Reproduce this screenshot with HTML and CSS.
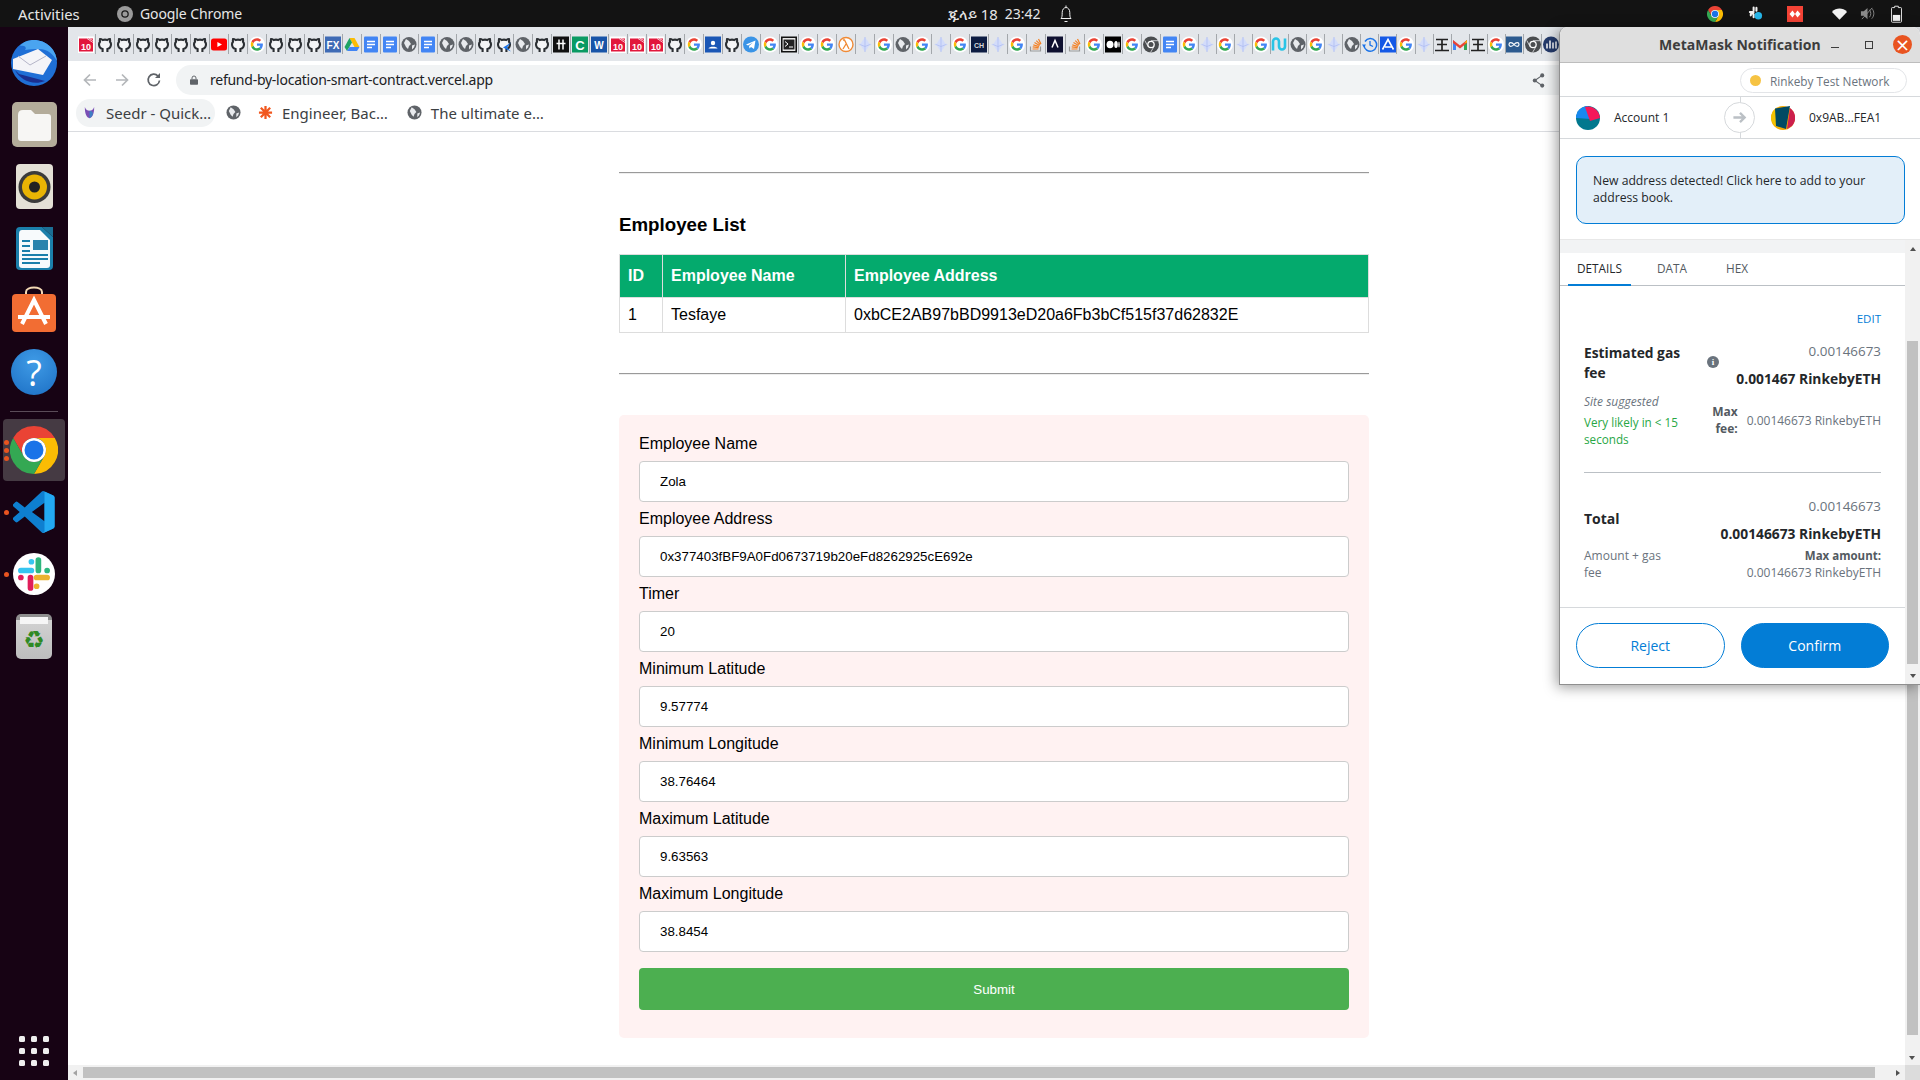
FILE: index.html
```html
<!DOCTYPE html>
<html lang="en">
<head>
<meta charset="utf-8">
<title>Refund by location</title>
<link rel="stylesheet" href="styles.css">
</head>
<body>
<svg class="defs" aria-hidden="true">
  <symbol id="io" viewBox="0 0 16 16"><rect width="16" height="17" fill="#fff"/><rect x="1" y="2" width="14" height="13" fill="#e2173c"/><path d="M9 2l6 4M11 2l4 2" stroke="#fff" stroke-width=".7"/><text x="8" y="13.5" class="t9 w" text-anchor="middle">10</text></symbol>
  <symbol id="gh" viewBox="0 0 16 16"><path d="M5.6 15.4v-2.8C3.4 12 2 10.5 2 7.8c0-1 .4-1.9 1-2.6-.2-.6-.2-1.6.1-2.7 1 0 1.9.5 2.6 1 1.4-.4 3.2-.4 4.6 0 .7-.5 1.6-1 2.6-1 .3 1.1.3 2.1.1 2.7.6.7 1 1.6 1 2.6 0 2.7-1.4 4.2-3.6 4.8v2.8" fill="#f4f5f6" stroke="#2b2f33" stroke-width="2.100"/></symbol>
  <symbol id="gx" viewBox="0 0 16 16"><use href="#gh"/><path d="M7 11l8-5-4 5 4 4z" fill="#1a73e8"/></symbol>
  <symbol id="yt" viewBox="0 0 16 16"><rect y="2" width="16" height="12" rx="2.5" fill="#f00"/><path d="M6.4 5.4v5.2L11 8z" fill="#fff"/></symbol>
  <symbol id="g" viewBox="0 0 18 18"><circle cx="9" cy="9" r="9" fill="#fff"/><g transform="translate(2 2) scale(.29)"><path fill="#EA4335" d="M24 9.5c3.54 0 6.71 1.22 9.21 3.6l6.85-6.85C35.9 2.38 30.47 0 24 0 14.62 0 6.51 5.38 2.56 13.22l7.98 6.19C12.43 13.72 17.74 9.5 24 9.5z"/><path fill="#4285F4" d="M46.98 24.55c0-1.57-.15-3.09-.38-4.55H24v9.02h12.94c-.58 2.96-2.26 5.48-4.78 7.18l7.73 6c4.51-4.18 7.09-10.36 7.09-17.65z"/><path fill="#FBBC05" d="M10.53 28.59c-.48-1.45-.76-2.99-.76-4.59s.27-3.14.76-4.59l-7.98-6.19C.92 16.46 0 20.12 0 24c0 3.88.92 7.54 2.56 10.78l7.97-6.19z"/><path fill="#34A853" d="M24 48c6.48 0 11.93-2.13 15.89-5.81l-7.73-6c-2.15 1.45-4.92 2.3-8.16 2.3-6.26 0-11.57-4.22-13.47-9.91l-7.98 6.19C6.51 42.62 14.62 48 24 48z"/></g></symbol>
  <symbol id="fx" viewBox="0 0 16 16"><rect width="16" height="16" fill="#3f6bb5"/><text x="8" y="12" class="t10 w" text-anchor="middle">FX</text></symbol>
  <symbol id="dr" viewBox="0 0 16 16"><path d="M5.5 1.5h5l5 9h-5z" fill="#fbbc04"/><path d="M5.5 1.5L.5 10.500l2.500 4 5-8.500z" fill="#1fa463"/><path d="M3 14.500h10l2.500-4h-10z" fill="#4285f4"/></symbol>
  <symbol id="doc" viewBox="0 0 16 16"><rect x="1" width="14" height="16" rx="1" fill="#4285f4"/><path d="M4 5h8M4 8h8M4 11h5" stroke="#fff" stroke-width="1.400"/></symbol>
  <symbol id="gl" viewBox="0 0 16 16"><circle cx="8" cy="8" r="7.500" fill="#5f6368"/><path d="M5 2.500l3 2 2 3-2 2-1 3-2-2-2-4zM11 9l3-1-1 3-2 2z" fill="#e8eaed"/></symbol>
  <symbol id="hh" viewBox="0 0 16 16"><rect width="16" height="16" fill="#111"/><path d="M6 3v10M10 3v10M3.500 7h9" stroke="#fff" stroke-width="1.500"/></symbol>
  <symbol id="cc" viewBox="0 0 16 16"><rect width="16" height="16" fill="#0a9a63"/><text x="8" y="13" class="t12 w" text-anchor="middle">C</text></symbol>
  <symbol id="ww" viewBox="0 0 16 16"><rect width="16" height="16" fill="#1854a8"/><text x="8" y="12" class="t10 w" text-anchor="middle">W</text></symbol>
  <symbol id="ct" viewBox="0 0 16 16"><rect width="16" height="16" fill="#1a56b5"/><circle cx="8" cy="6.500" r="2.200" fill="#fff"/><path d="M3.500 12c.5-2.500 8.500-2.500 9 0z" fill="#fff"/></symbol>
  <symbol id="tg" viewBox="0 0 16 16"><circle cx="8" cy="8" r="8" fill="#3a94e6"/><path d="M3 8l9.500-4-1.500 8.500-3-2-1.500 1.500-.5-2.500 4-3.500-5 3z" fill="#fff"/></symbol>
  <symbol id="tm" viewBox="0 0 16 16"><rect x=".8" y=".8" width="14.400" height="14.400" fill="#fff" stroke="#111" stroke-width="1.600"/><rect x="2.500" y="3" width="11" height="10" fill="#222"/><path d="M4 5l3 2.500L4 10M8 10.500h4" stroke="#fff" fill="none"/></symbol>
  <symbol id="la" viewBox="0 0 16 16"><circle cx="8" cy="8" r="7" fill="#fff" stroke="#f08a35" stroke-width="1.400"/><path d="M5 3.500h1.500L11 12.500M8 7.500l-3 5" stroke="#f08a35" stroke-width="1.300" fill="none"/></symbol>
  <symbol id="et" viewBox="0 0 16 16"><path d="M8 .5L13 8l-5 7.500L3 8z" fill="#d3dcfa"/><path d="M8 .5v15M3 8l5 2 5-2" stroke="#aab9f0" stroke-width=".7" fill="none"/><circle cx="2.500" cy="8" r=".8" fill="#c9d4f7"/><circle cx="13.500" cy="8" r=".8" fill="#c9d4f7"/></symbol>
  <symbol id="ch" viewBox="0 0 16 16"><rect width="16" height="16" fill="#0d1c42"/><text x="8" y="11" class="t7 l" text-anchor="middle">CH</text></symbol>
  <symbol id="so" viewBox="0 0 16 16"><path d="M2.500 10v4.500h10V10" fill="none" stroke="#9a9a9a" stroke-width="1.200"/><path d="M4.500 12.500h6M4.700 10.400l6 .7M5.300 8.300l5.800 1.700M6.500 6.100l5.100 3M8.300 4.200l4 4M10.500 2.500l2.500 5" stroke="#f48024" stroke-width="1.200"/></symbol>
  <symbol id="ad" viewBox="0 0 16 16"><rect width="16" height="16" fill="#0e1030"/><path d="M5 11l3-7 3 7" fill="none" stroke="#fff" stroke-width="1.500"/></symbol>
  <symbol id="md" viewBox="0 0 16 16"><rect width="16" height="16" fill="#000"/><ellipse cx="5" cy="8" rx="3.500" ry="3.800" fill="#fff"/><ellipse cx="11" cy="8" rx="1.800" ry="3.500" fill="#fff"/><ellipse cx="14" cy="8" rx=".7" ry="3" fill="#fff"/></symbol>
  <symbol id="cg" viewBox="0 0 16 16"><circle cx="8" cy="8" r="8" fill="#4a4d50"/><circle cx="8" cy="8" r="3.800" fill="#fff"/><circle cx="8" cy="8" r="2.500" fill="#4a4d50"/><path d="M8 4.200h7M5 10L1.800 4M11 10l-3.500 6" stroke="#e8eaed" stroke-width=".8"/></symbol>
  <symbol id="cy" viewBox="0 0 16 16"><path d="M2 14V5a3 3 0 0 1 6 0v5a3 3 0 0 0 6 0V2" fill="none" stroke="#29c4e6" stroke-width="2.600"/></symbol>
  <symbol id="hi" viewBox="0 0 16 16"><path d="M3 5a6.300 6.300 0 1 1-1 3.500" fill="none" stroke="#1a73e8" stroke-width="1.500"/><path d="M0 8h4L2 11z" fill="#1a73e8"/><path d="M8 4.500V8.500l3 1.500" fill="none" stroke="#1a73e8" stroke-width="1.300"/></symbol>
  <symbol id="ab" viewBox="0 0 16 16"><rect width="16" height="16" fill="#1559e6"/><path d="M2.500 13L8 3l5.500 10M5 10.500h7" fill="none" stroke="#fff" stroke-width="1.600"/></symbol>
  <symbol id="wa" viewBox="0 0 16 16"><path d="M2 3h12M3 8h10M1 14h14M8 3v11" stroke="#222" stroke-width="1.700"/></symbol>
  <symbol id="gm" viewBox="0 0 16 16"><path d="M1 3.500v10h3V7z" fill="#4285f4"/><path d="M15 3.500v10h-3V7z" fill="#34a853"/><path d="M1 3.500L8 9l7-5.500v3L8 12 1 6.500z" fill="#ea4335"/><path d="M12 7l3-3.500V6z" fill="#fbbc04"/></symbol>
  <symbol id="oo" viewBox="0 0 16 16"><rect width="16" height="16" fill="#2c5a8f"/><path d="M8 8C6 5.500 3 5.500 3 8s3 2.500 5 0 5-2.500 5 0-3 2.500-5 0z" fill="none" stroke="#fff" stroke-width="1.200"/></symbol>
  <symbol id="mm" viewBox="0 0 16 16"><circle cx="8" cy="8" r="8" fill="#243a6b"/><path d="M4 12V7M7 12V4M10 12V6M13 12V5" stroke="#fff" stroke-width="1.500"/></symbol>
  <symbol id="chrome" viewBox="0 0 48 48"><path d="M24 0a24 24 0 0 1 20.800 12H24a12 12 0 0 0-10.400 18L3.200 12A24 24 0 0 1 24 0z" fill="#ea4335"/><path d="M44.800 12A24 24 0 0 1 24 48l10.400-18A12 12 0 0 0 24 12z" fill="#fbbc04"/><path d="M3.200 12A24 24 0 0 0 24 48l10.400-18a12 12 0 0 1-20.800 0z" fill="#34a853"/><circle cx="24" cy="24" r="12" fill="#fff"/><circle cx="24" cy="24" r="9.500" fill="#1a73e8"/></symbol>
</svg>

<header class="topbar">
  <div class="top-left">
    <span class="activities">Activities</span>
    <svg class="app-ico" viewBox="0 0 16 16"><circle cx="8" cy="8" r="8" fill="#9a9a9a"/><circle cx="8" cy="8" r="3.800" fill="#1a1a1a"/><circle cx="8" cy="8" r="2.500" fill="#9a9a9a"/></svg>
    <span class="app-name">Google Chrome</span>
  </div>
  <div class="clock"><span class="date">ጁላይ 18</span><span class="time">23:42</span>
    <svg class="bell" viewBox="0 0 14 18"><path d="M2 13.500c1-1 1.200-2.500 1.200-6C3.200 4.500 5 2.500 7 2.500s3.800 2 3.800 5c0 3.500.2 5 1.200 6zM7 .5v2M5.500 16.500h3" fill="none" stroke="#f2f2f2" stroke-width="1"/></svg>
  </div>
  <div class="tray">
    <svg class="tr tr-chrome"><use href="#chrome"/></svg>
    <svg class="tr tr-slack" viewBox="0 0 16 16"><path d="M6 1.500v3M2 6.500h4M9 2v3M3 10a1 1 0 0 1 3-1v3" stroke="#f2f2f2" stroke-width="2.200" stroke-linecap="round" fill="none"/><circle cx="11" cy="10.500" r="4" fill="#26b5e8"/></svg>
    <svg class="tr tr-red" viewBox="0 0 16 16"><rect width="16" height="16" fill="#f44336"/><path d="M5.500 4.500L2.500 8l3 3.500L8 8zM10.500 4.500L8 8l2.500 3.500 3-3.500z" fill="#fff"/></svg>
    <svg class="tr tr-wifi" viewBox="0 0 18 14"><path d="M0 4.500C5-.8 13-.8 18 4.500L9 14z" fill="#f2f2f2"/></svg>
    <svg class="tr tr-vol" viewBox="0 0 16 16"><path d="M1 5.500h3L8 2v12l-4-3.500H1z" fill="#8a8a8a"/><path d="M10 4c2 2 2 6 0 8M12.500 2.500c3 3 3 8 0 11M2 14L13 2" stroke="#8a8a8a" fill="none"/></svg>
    <svg class="tr tr-bat" viewBox="0 0 12 18"><path d="M4 .5h4v1.500h2.500a1 1 0 0 1 1 1V17a1 1 0 0 1-1 1h-9a1 1 0 0 1-1-1V3a1 1 0 0 1 1-1H4z" fill="none" stroke="#f2f2f2"/><rect x="2" y="10" width="8" height="6.500" fill="#f2f2f2"/></svg>
  </div>
</header>

<div class="desktop">
  <nav class="dock">
    <div class="slot"><svg class="d48" viewBox="0 0 48 48"><circle cx="24" cy="25" r="23" fill="#1f6fd6"/><path d="M24 2c12 0 22 9 23 21-4-7-9-12-18-12-5 0-9 0-14 1C18 8 12 7 10 8c3-4 8-6 14-6z" fill="#4aa4f0"/><path d="M5 32c5 10 18 16 30 11L9 36z" fill="#1b2f8f"/><path d="M3 21L28 11l14 11-9 15-30-6z" fill="#f4f4f8"/><path d="M8 18l12 9 16-9" fill="none" stroke="#b5b5c8"/></svg></div>
    <div class="slot"><svg class="d45" viewBox="0 0 45 45"><rect width="45" height="45" rx="5" fill="#b4ac9a"/><path d="M6 13q0-5 5-5h8l4 4h13q3 0 3 3v21q0 3-3 3H9q-3 0-3-3z" fill="#f7f6f4"/></svg></div>
    <div class="slot"><svg class="d45" viewBox="0 0 45 45"><rect x="4" width="37" height="45" rx="4" fill="#e4e0d6"/><circle cx="22.500" cy="23" r="16" fill="#3b3b3b"/><circle cx="22.500" cy="23" r="12.500" fill="#e9b404"/><circle cx="22.500" cy="23" r="5.500" fill="#222"/></svg></div>
    <div class="slot"><svg class="d45" viewBox="0 0 45 45"><path d="M4 5q0-4 4-4h22l11 10v29q0 4-4 4H8q-4 0-4-4z" fill="#1b7fab"/><path d="M7 8q0-4 3-4h18l10 10v25q0 3-3 3H10q-3 0-3-3z" fill="#f7fafc"/><path d="M30 1l11 10V1z" fill="#1b6f95"/><rect x="21" y="14" width="15" height="10" fill="#2a83ad"/><path d="M10 15h8M10 20h8M10 25h8M10 29h26M10 33h26M10 37h18" stroke="#1b7fab" stroke-width="1.800"/></svg></div>
    <div class="slot"><svg class="d48" viewBox="0 0 48 48"><path d="M16 10V6c0-6 16-6 16 0v4" fill="none" stroke="#f3d9b5" stroke-width="2"/><rect x="2" y="8" width="44" height="38" rx="4" fill="#f26d33"/><path d="M12 38L24 14l12 24M8 31h32" fill="none" stroke="#fff" stroke-width="4"/></svg></div>
    <div class="slot"><span class="help">?</span></div>
    <hr class="dock-sep">
    <div class="slot running"><span class="dots"><i></i><i></i><i></i></span><svg class="d48"><use href="#chrome"/></svg></div>
    <div class="slot"><span class="dots"><i></i></span><svg class="d44" viewBox="0 0 100 100"><path d="M96 11L75 1a6 6 0 0 0-7 1L28 39 11 26a4 4 0 0 0-5 0L1 31a4 4 0 0 0 0 6l15 13L1 63a4 4 0 0 0 0 6l5 5a4 4 0 0 0 5 0l17-13 40 37a6 6 0 0 0 7 1l21-10a6 6 0 0 0 3-6V17a6 6 0 0 0-3-6zM75 72L45 50l30-22z" fill="#0e7fd0" fill-rule="evenodd"/><path d="M75 1l21 10a6 6 0 0 1 3 6v66a6 6 0 0 1-3 6L75 99a6 6 0 0 1-7-1c3 2 7 0 7-3z" fill="#23a9f2"/></svg></div>
    <div class="slot"><span class="dots"><i></i></span><svg class="d44" viewBox="0 0 48 48"><circle cx="24" cy="24" r="24" fill="#fff"/><path d="M9 20h12M21 10v0" stroke="#36c5f0" stroke-width="6.500" stroke-linecap="round"/><path d="M29 8v12M39 20v0" stroke="#2eb67d" stroke-width="6.500" stroke-linecap="round"/><path d="M39 28H27M27 38v0" stroke="#ecb22e" stroke-width="6.500" stroke-linecap="round"/><path d="M20 28v12M9 28v0" stroke="#e01e5a" stroke-width="6.500" stroke-linecap="round"/></svg></div>
    <div class="slot"><span class="trash"><span class="trash-lid"></span><span class="recycle">♻</span></span></div>
    <div class="apps"><i></i><i></i><i></i><i></i><i></i><i></i><i></i><i></i><i></i></div>
  </nav>

  <div class="browser">
    <div class="tabstrip">
      <i class="bm"><svg><use href="#io"/></svg></i><i class="bm"><svg><use href="#gh"/></svg></i><i class="bm"><svg><use href="#gh"/></svg></i><i class="bm"><svg><use href="#gh"/></svg></i><i class="bm"><svg><use href="#gh"/></svg></i><i class="bm"><svg><use href="#gh"/></svg></i><i class="bm"><svg><use href="#gh"/></svg></i><i class="bm"><svg><use href="#yt"/></svg></i><i class="bm"><svg><use href="#gh"/></svg></i><i class="bm"><svg><use href="#g"/></svg></i>
      <i class="bm"><svg><use href="#gh"/></svg></i><i class="bm"><svg><use href="#gh"/></svg></i><i class="bm"><svg><use href="#gh"/></svg></i><i class="bm"><svg><use href="#fx"/></svg></i><i class="bm"><svg><use href="#dr"/></svg></i><i class="bm"><svg><use href="#doc"/></svg></i><i class="bm"><svg><use href="#doc"/></svg></i><i class="bm"><svg><use href="#gl"/></svg></i><i class="bm"><svg><use href="#doc"/></svg></i><i class="bm"><svg><use href="#gl"/></svg></i>
      <i class="bm"><svg><use href="#gl"/></svg></i><i class="bm"><svg><use href="#gh"/></svg></i><i class="bm"><svg><use href="#gx"/></svg></i><i class="bm"><svg><use href="#gl"/></svg></i><i class="bm"><svg><use href="#gh"/></svg></i><i class="bm"><svg><use href="#hh"/></svg></i><i class="bm"><svg><use href="#cc"/></svg></i><i class="bm"><svg><use href="#ww"/></svg></i><i class="bm"><svg><use href="#io"/></svg></i><i class="bm"><svg><use href="#io"/></svg></i>
      <i class="bm"><svg><use href="#io"/></svg></i><i class="bm"><svg><use href="#gh"/></svg></i><i class="bm"><svg><use href="#g"/></svg></i><i class="bm"><svg><use href="#ct"/></svg></i><i class="bm"><svg><use href="#gh"/></svg></i><i class="bm"><svg><use href="#tg"/></svg></i><i class="bm"><svg><use href="#g"/></svg></i><i class="bm"><svg><use href="#tm"/></svg></i><i class="bm"><svg><use href="#g"/></svg></i><i class="bm"><svg><use href="#g"/></svg></i>
      <i class="bm"><svg><use href="#la"/></svg></i><i class="bm"><svg><use href="#et"/></svg></i><i class="bm"><svg><use href="#g"/></svg></i><i class="bm"><svg><use href="#gl"/></svg></i><i class="bm"><svg><use href="#g"/></svg></i><i class="bm"><svg><use href="#et"/></svg></i><i class="bm"><svg><use href="#g"/></svg></i><i class="bm"><svg><use href="#ch"/></svg></i><i class="bm"><svg><use href="#et"/></svg></i><i class="bm"><svg><use href="#g"/></svg></i>
      <i class="bm"><svg><use href="#so"/></svg></i><i class="bm"><svg><use href="#ad"/></svg></i><i class="bm"><svg><use href="#so"/></svg></i><i class="bm"><svg><use href="#g"/></svg></i><i class="bm"><svg><use href="#md"/></svg></i><i class="bm"><svg><use href="#g"/></svg></i><i class="bm"><svg><use href="#cg"/></svg></i><i class="bm"><svg><use href="#doc"/></svg></i><i class="bm"><svg><use href="#g"/></svg></i><i class="bm"><svg><use href="#et"/></svg></i>
      <i class="bm"><svg><use href="#g"/></svg></i><i class="bm"><svg><use href="#et"/></svg></i><i class="bm"><svg><use href="#g"/></svg></i><i class="bm"><svg><use href="#cy"/></svg></i><i class="bm"><svg><use href="#gl"/></svg></i><i class="bm"><svg><use href="#g"/></svg></i><i class="bm"><svg><use href="#et"/></svg></i><i class="bm"><svg><use href="#gl"/></svg></i><i class="bm"><svg><use href="#hi"/></svg></i><i class="bm"><svg><use href="#ab"/></svg></i>
      <i class="bm"><svg><use href="#g"/></svg></i><i class="bm"><svg><use href="#et"/></svg></i><i class="bm"><svg><use href="#wa"/></svg></i><i class="bm"><svg><use href="#gm"/></svg></i><i class="bm"><svg><use href="#wa"/></svg></i><i class="bm"><svg><use href="#g"/></svg></i><i class="bm"><svg><use href="#oo"/></svg></i><i class="bm"><svg><use href="#cg"/></svg></i><i class="bm"><svg><use href="#mm"/></svg></i>
    </div>

    <div class="toolbar">
      <svg class="nav-ico" viewBox="0 0 16 16"><path d="M14 8H3M8 2.500L2.500 8 8 13.500" fill="none" stroke="#b4b7ba" stroke-width="1.700"/></svg>
      <svg class="nav-ico" viewBox="0 0 16 16"><path d="M2 8h11M8 2.500L13.500 8 8 13.500" fill="none" stroke="#b4b7ba" stroke-width="1.700"/></svg>
      <svg class="nav-ico" viewBox="0 0 16 16"><path d="M13.500 8.500A5.700 5.700 0 1 1 12 4" fill="none" stroke="#5f6368" stroke-width="1.700"/><path d="M14 1v5H9z" fill="#5f6368"/></svg>
      <div class="omnibox">
        <svg class="lock" viewBox="0 0 10 12"><path d="M2.500 5V3.500a2.500 2.500 0 0 1 5 0V5" fill="none" stroke="#5f6368" stroke-width="1.200"/><rect y="5" width="10" height="7" rx="1" fill="#5f6368"/></svg>
        <span class="url">refund-by-location-smart-contract.vercel.app</span>
        <svg class="share" viewBox="0 0 14 16"><circle cx="11" cy="2.500" r="2.200" fill="#5f6368"/><circle cx="3" cy="8" r="2.200" fill="#5f6368"/><circle cx="11" cy="13.500" r="2.200" fill="#5f6368"/><path d="M11 2.500L3 8l8 5.500" fill="none" stroke="#5f6368" stroke-width="1.200"/></svg>
      </div>
    </div>

    <div class="bookmarks">
      <span class="chip"><svg class="bk-ico" viewBox="0 0 16 16"><path d="M3 2c0 8 2 11 5 12 3-1 5-4 5-12-1 3-3 4-5 4S4 5 3 2z" fill="#7a4fb5"/><path d="M8 6c2 0 3.500 1 3.500 3S10 13 8 14z" fill="#3f7fc4"/></svg>Seedr - Quick…</span>
      <svg class="bk-ico bk-globe"><use href="#gl"/></svg>
      <span class="bk"><svg class="bk-ico" viewBox="0 0 16 16"><path d="M8 1v14M1 8h14M3 3l10 10M13 3L3 13" stroke="#f1571e" stroke-width="2.400"/></svg>Engineer, Bac…</span>
      <span class="bk"><svg class="bk-ico"><use href="#gl"/></svg>The ultimate e…</span>
    </div>

    <div class="viewport">
      <main class="page">
        <hr class="rule">
        <h3 class="list-title">Employee List</h3>
        <table class="emp">
          <thead>
            <tr><th class="c-id">ID</th><th class="c-name">Employee Name</th><th>Employee Address</th></tr>
          </thead>
          <tbody>
            <tr><td>1</td><td>Tesfaye</td><td>0xbCE2AB97bBD9913eD20a6Fb3bCf515f37d62832E</td></tr>
          </tbody>
        </table>
        <hr class="rule">
        <form class="emp-form">
          <label>Employee Name</label><input type="text" value="Zola">
          <label>Employee Address</label><input type="text" value="0x377403fBF9A0Fd0673719b20eFd8262925cE692e">
          <label>Timer</label><input type="text" value="20">
          <label>Minimum Latitude</label><input type="text" value="9.57774">
          <label>Minimum Longitude</label><input type="text" value="38.76464">
          <label>Maximum Latitude</label><input type="text" value="9.63563">
          <label>Maximum Longitude</label><input type="text" value="38.8454">
          <input class="submit" type="button" value="Submit">
        </form>
      </main>
      <div class="vbar"><span class="vthumb"></span><span class="arr-down"></span></div>
    </div>
    <div class="hbar"><span class="arr-left"></span><span class="hthumb"></span><span class="arr-right"></span><span class="corner"></span></div>
  </div>
</div>

<aside class="metamask">
  <div class="mm-title">
    <span class="mm-name">MetaMask Notification</span>
    <span class="win-min"></span><span class="win-max"></span>
    <span class="win-close">×</span>
  </div>
  <div class="mm-net"><span class="pill"><i class="net-dot"></i>Rinkeby Test Network</span></div>
  <div class="mm-acct">
    <div class="acct-side">
      <svg class="avatar" viewBox="0 0 24 24"><circle cx="12" cy="12" r="12" fill="#01788e"/><path d="M0 12a12 12 0 0 1 12-12l3 13z" fill="#1888f0"/><path d="M9 1a12 12 0 0 1 15 11l-10 3z" fill="#f5175a"/></svg>
      <span class="acct-name">Account 1</span>
    </div>
    <span class="acct-arrow"><svg viewBox="0 0 16 16"><path d="M1.500 8h12M8.500 3l5 5-5 5" fill="none" stroke="#bbc0c5" stroke-width="2.500"/></svg></span>
    <div class="acct-side acct-right">
      <svg class="avatar" viewBox="0 0 24 24"><circle cx="12" cy="12" r="12" fill="#f5a800"/><path d="M0 12a12 12 0 0 1 5-9.700l3 19.700A12 12 0 0 1 0 12z" fill="#f5c400"/><path d="M4 2.500L19 0l-4 23-10-3z" fill="#014a63"/><path d="M19 2a12 12 0 0 1 2 18l-5 3z" fill="#cc1f4d"/></svg>
      <span class="acct-name">0x9AB...FEA1</span>
    </div>
  </div>
  <div class="mm-banner-wrap">
    <p class="banner">New address detected! Click here to add to your address book.</p>
  </div>
  <div class="mm-lower">
    <div class="mm-col">
      <div class="mm-band"></div>
      <div class="mm-tabs"><span class="tab tab-on">DETAILS</span><span class="tab">DATA</span><span class="tab">HEX</span></div>
      <div class="mm-details">
        <div class="edit">EDIT</div>
        <div class="row row-a">
          <div class="gas-title">Estimated gas fee</div>
          <span class="info">i</span>
          <div class="vals">
            <div class="v-gray">0.00146673</div>
            <div class="v-bold">0.001467 RinkebyETH</div>
          </div>
        </div>
        <div class="row row-b">
          <div class="gas-note">
            <div class="site">Site suggested</div>
            <div class="likely">Very likely in &lt; 15 seconds</div>
          </div>
          <div class="maxline">
            <span class="max-label">Max<br>fee:</span>
            <span class="small">0.00146673 RinkebyETH</span>
          </div>
        </div>
        <div class="mm-hr"></div>
        <div class="row row-c">
          <div class="total">Total</div>
          <div class="vals">
            <div class="v-gray">0.00146673</div>
            <div class="v-bold">0.00146673 RinkebyETH</div>
          </div>
        </div>
        <div class="row row-d">
          <div class="amount">Amount + gas fee</div>
          <div class="vals">
            <div class="max-amount">Max amount:</div>
            <div class="small">0.00146673 RinkebyETH</div>
          </div>
        </div>
      </div>
      <div class="mm-footer">
        <button class="btn btn-out" type="button">Reject</button>
        <button class="btn btn-fill" type="button">Confirm</button>
      </div>
    </div>
    <div class="mm-vbar"><span class="arr-up"></span><span class="mm-thumb"></span><span class="arr-down"></span></div>
  </div>
</aside>
</body>
</html>
```

FILE: styles.css
```css
* { box-sizing: border-box; }
html, body { margin: 0; height: 100%; }
body {
  width: 1920px;
  height: 1080px;
  overflow: hidden;
  display: flex;
  flex-direction: column;
  position: relative;
  background: #fff;
  font-family: "Liberation Sans", Arial, sans-serif;
}
.defs { display: none; }
.t7 { font: 700 7px "Liberation Sans", sans-serif; }
.t9 { font: 700 9px "Liberation Sans", sans-serif; }
.t10 { font: 700 10px "Liberation Sans", sans-serif; }
.t12 { font: 700 13px "Liberation Sans", sans-serif; }
.w { fill: #fff; }
.l { fill: #d5d8dd; }

/* top bar */
.topbar {
  height: 27px;
  flex: none;
  background: #131313;
  display: flex;
  align-items: center;
  color: #e6e6e6;
  font-family: "Noto Sans", sans-serif;
  font-size: 14px;
}
.top-left { width: 948px; display: flex; align-items: center; padding-left: 18px; }
.activities { width: 99px; font-size: 14.8px; }
.app-ico { width: 16px; height: 16px; margin-right: 7px; }
.app-name { letter-spacing: -.1px; }
.clock { display: flex; align-items: center; font-size: 14px; }
.date { font-size: 14.8px; }
.time { margin-left: 7px; }
.bell { width: 14px; height: 18px; margin-left: 18px; }
.tray { margin-left: auto; display: flex; align-items: center; padding-right: 18px; }
.tr { display: block; }
.tr-chrome { width: 16px; height: 16px; }
.tr-slack { width: 15px; height: 15px; margin-left: 25px; }
.tr-red { width: 16px; height: 16px; margin-left: 24px; }
.tr-wifi { width: 15px; height: 12px; margin-left: 29px; }
.tr-vol { width: 15px; height: 15px; margin-left: 13px; }
.tr-bat { width: 11px; height: 18px; margin-left: 16px; }

/* layout */
.desktop { flex: 1; display: flex; min-height: 0; }

/* dock */
.dock {
  width: 68px;
  flex: none;
  background: #170314;
  display: flex;
  flex-direction: column;
  align-items: center;
  padding: 4px 0 14px;
}
.slot {
  width: 62px;
  height: 62px;
  flex: none;
  display: flex;
  align-items: center;
  justify-content: center;
  position: relative;
  border-radius: 4px;
}
.running { background: #453a43; }
.d48 { width: 48px; height: 48px; }
.d45 { width: 45px; height: 45px; }
.d44 { width: 42px; height: 42px; }
.help {
  width: 46px; height: 46px; border-radius: 50%;
  background: radial-gradient(circle at 50% 30%, #3f9be6, #1c6fc4);
  color: #fff;
  display: flex; align-items: center; justify-content: center;
  font: 400 36px "Open Sans", sans-serif;
}
.dock-sep { width: 48px; height: 1px; border: 0; background: #5a4c58; margin: 8px 0 7px; flex: none; }
.dots {
  position: absolute; left: 0; top: 0; bottom: 0;
  display: flex; flex-direction: column; justify-content: center; gap: 3px;
}
.dots i { width: 5px; height: 5px; border-radius: 50%; background: #e95420; display: block; margin-left: 1px; }
.trash {
  width: 36px; height: 45px; border-radius: 5px;
  background: linear-gradient(#8e8e8e 0, #8e8e8e 6px, #d2d2d2 6px, #bdbdbd);
  display: flex; flex-direction: column; align-items: center; overflow: hidden;
}
.trash-lid { width: 28px; height: 7px; background: #f6f6f6; margin-top: 3px; flex: none; }
.recycle { color: #2f8a24; font: 24px/32px "DejaVu Sans", sans-serif; }
.apps {
  margin-top: auto;
  display: grid;
  grid-template-columns: repeat(3, 6px);
  gap: 6px;
}
.apps i { width: 6px; height: 6px; border-radius: 1.5px; background: #eee; display: block; }

/* browser */
.browser { flex: 1; min-width: 0; display: flex; flex-direction: column; }
.tabstrip {
  height: 34px;
  flex: none;
  background: #e3e6ea;
  display: flex;
  align-items: center;
  padding-left: 8.7px;
  overflow: hidden;
}
.bm {
  flex: none;
  width: 19.02px;
  height: 20px;
  border-right: 1px solid #a3a7ab;
  display: flex;
  align-items: center;
  justify-content: center;
}
.bm:nth-child(n+60) { width: 18.08px; }
.bm svg { width: 16px; height: 17px; display: block; flex: none; }
.toolbar {
  height: 34px;
  flex: none;
  background: #fff;
  display: flex;
  align-items: flex-end;
  padding-left: 14px;
}
.nav-ico { width: 16px; height: 16px; margin: 0 16px 7px 0; flex: none; }
.omnibox {
  flex: 1;
  height: 30px;
  margin-left: -2px;
  background: #f1f3f4;
  border-radius: 15px 0 0 15px;
  display: flex;
  align-items: center;
  padding-left: 14px;
  padding-right: 375px;
}
.lock { width: 8px; height: 10px; margin-right: 12px; }
.url { font: 14px "Noto Sans", sans-serif; color: #202124; letter-spacing: -.25px; margin-bottom: 2px; }
.share { width: 13px; height: 15px; margin-left: auto; }
.bookmarks {
  height: 37px;
  flex: none;
  background: #fff;
  border-bottom: 1px solid #dadce0;
  display: flex;
  align-items: center;
  padding: 0 0 1px 8px;
  font: 15px "Noto Sans", sans-serif;
  color: #3c4043;
}
.chip {
  height: 28px; width: 139px;
  background: #f1f3f4;
  border-radius: 14px;
  display: flex; align-items: center;
  padding-left: 6px;
  white-space: nowrap;
  overflow: hidden;
}
.bk-ico { width: 15px; height: 15px; flex: none; margin-right: 9px; }
.bk-globe { margin-left: 11px; margin-right: 17px; }
.bk { display: flex; align-items: center; white-space: nowrap; margin-right: 19px; }
.bk:last-child { margin-right: 0; }

/* page content */
.viewport { flex: 1; min-height: 0; display: flex; }
.page {
  flex: 1;
  min-width: 0;
  padding-left: 551px;
  padding-right: 536px;
  display: flow-root;
  overflow: hidden;
}
.rule {
  margin: 40px 0;
  border: 0;
  border-top: 1px solid #9a9a9a;
  border-bottom: 1px solid #eee;
  height: 2px;
}
.list-title {
  font-size: 18.72px;
  font-weight: 700;
  margin: 18.72px 0;
  line-height: 21px;
  color: #000;
}
.emp { width: 100%; border-collapse: collapse; font-size: 16px; color: #000; }
.emp th, .emp td { border: 1px solid #ddd; padding: 8px; text-align: left; line-height: 18px; }
.emp th { padding: 12px 8px; background: #04aa6d; color: #fff; }
.c-id { width: 43px; }
.c-name { width: 183px; }
.emp-form {
  background: #fff2f2;
  border-radius: 5px;
  padding: 20px;
}
.emp-form label { display: block; font-size: 16px; line-height: 18px; color: #000; }
.emp-form input {
  display: block;
  width: 100%;
  height: 41px;
  margin: 8px 0;
  padding: 12px 20px;
  border: 1px solid #ccc;
  border-radius: 4px;
  background: #fff;
  color: #000;
  font: 13.333px "Liberation Sans", sans-serif;
}
.emp-form .submit {
  height: 42px;
  margin-top: 16px;
  padding: 2px 20px 0;
  border: 0;
  background: #4caf50;
  color: #fff;
}
.vbar { width: 15px; flex: none; background: #f1f1f1; position: relative; padding: 0 2px; }
.vthumb { display: block; height: 903px; background: #c1c1c1; }
.vbar .arr-down { position: absolute; left: 4px; bottom: 5px; }
.arr-down, .arr-up, .arr-left, .arr-right { display: block; width: 0; height: 0; border-style: solid; border-color: transparent; }
.arr-down { border-width: 4px 3.5px 0; border-top-color: #505050; }
.arr-up { border-width: 0 3.5px 4px; border-bottom-color: #505050; }
.arr-left { border-width: 3.5px 4px 3.5px 0; border-right-color: #a3a3a3; }
.arr-right { border-width: 3.5px 0 3.5px 4px; border-left-color: #505050; }
.hbar {
  height: 15px;
  flex: none;
  background: #f1f1f1;
  display: flex;
  align-items: center;
}
.hbar .arr-left { margin-left: 5px; }
.hthumb { height: 11px; width: 1792px; margin-left: 6px; background: #c1c1c1; }
.hbar .arr-right { margin-left: 21px; }
.corner { width: 15px; height: 15px; margin-left: auto; background: #dcdcdc; }

/* MetaMask window */
.metamask {
  position: absolute;
  left: 1559px;
  top: 27px;
  width: 361px;
  height: 658px;
  background: #fff;
  border-left: 1px solid #8f8f8f;
  border-bottom: 1px solid #8f8f8f;
  border-radius: 8px 8px 0 0;
  box-shadow: -2px 2px 14px rgba(0, 0, 0, .4);
  display: flex;
  flex-direction: column;
  font-family: "Open Sans", sans-serif;
  color: #24272a;
  font-size: 12px;
}
.mm-title {
  height: 36px;
  flex: none;
  background: #dfdfdf;
  border-bottom: 1px solid #bdbdbd;
  border-radius: 8px 8px 0 0;
  display: flex;
  align-items: center;
  padding-left: 99px;
  color: #3d3d3d;
}
.mm-name { font: 700 14px "Noto Sans", sans-serif; width: 165px; white-space: nowrap; letter-spacing: .05px; }
.win-min { width: 8px; height: 1px; background: #3d3d3d; margin: 5px 0 0 7px; }
.win-max { width: 8px; height: 8px; border: 1px solid #3d3d3d; margin-left: 26px; }
.win-close {
  width: 19px; height: 19px; border-radius: 50%;
  background: #e95420; color: #fff;
  margin-left: 20px;
  display: flex; align-items: center; justify-content: center;
  font: 18px/1 "DejaVu Sans", sans-serif;
}
.mm-net {
  height: 34px;
  flex: none;
  border-bottom: 1px solid #d6d9dc;
  display: flex;
  align-items: flex-start;
  justify-content: flex-end;
  padding: 5px 13px 0 0;
}
.pill {
  width: 167px;
  height: 25px;
  border: 1px solid #e3e5e8;
  border-radius: 13px;
  display: flex;
  align-items: center;
  padding-left: 9px;
  color: #6a737d;
  font-size: 11.8px;
  white-space: nowrap;
}
.net-dot { width: 11px; height: 11px; border-radius: 50%; background: #f6c343; margin-right: 9px; }
.mm-acct {
  height: 42px;
  flex: none;
  border-bottom: 1px solid #d6d9dc;
  display: grid;
  grid-template-columns: 1fr 1fr;
  position: relative;
  align-items: center;
}
.acct-side { display: flex; align-items: center; padding-left: 16px; color: #24272a; font-size: 12px; }
.acct-right { border-left: 1px solid #d6d9dc; height: 100%; padding-left: 30px; }
.avatar { width: 24px; height: 24px; flex: none; margin-right: 14px; }
.acct-name { white-space: nowrap; }
.acct-arrow {
  position: absolute;
  left: 164px;
  top: 5px;
  width: 31px;
  height: 31px;
  border: 1px solid #d6d9dc;
  border-radius: 50%;
  background: #fff;
  display: flex;
  align-items: center;
  justify-content: center;
  z-index: 1;
}
.acct-arrow svg { width: 15px; height: 15px; }
.mm-banner-wrap { height: 101px; flex: none; padding: 17px 15px 16px 16px; border-bottom: 1px solid #e8e8e8; }
.banner {
  margin: 0;
  height: 68px;
  padding: 15px 16px;
  background: #e3eff9;
  border: 1px solid #037dd6;
  border-radius: 10px;
  font-size: 12.2px;
  line-height: 17px;
  color: #24272a;
}
.mm-lower { flex: 1; min-height: 0; display: flex; }
.mm-col { width: 345px; flex: none; display: flex; flex-direction: column; }
.mm-band { height: 13px; background: #f2f3f4; flex: none; }
.mm-tabs {
  height: 33px;
  flex: none;
  border-bottom: 1px solid #bbc0c5;
  display: flex;
  padding-left: 8px;
  font-size: 11.8px;
  color: #535a61;
}
.tab { height: 33px; display: flex; align-items: center; padding-bottom: 2px; border-bottom: 2px solid transparent; }
.tab:first-child { width: 63px; justify-content: center; margin-right: 26px; }
.tab-on { color: #24272a; border-bottom-color: #037dd6; }
.tab:nth-child(2) { margin-right: 39px; }
.mm-details { padding: 0 24px; }
.edit { margin-top: 26px; height: 14px; line-height: 14px; text-align: right; color: #037dd6; font-size: 11.5px; }
.row { display: flex; justify-content: space-between; position: relative; }
.row-a { margin-top: 14px; height: 53px; }
.gas-title { font-size: 13.8px; font-weight: 700; line-height: 20px; width: 108px; padding-top: 3px; color: #24272a; }
.info {
  position: absolute;
  left: 123px;
  top: 16px;
  width: 12px;
  height: 12px;
  border-radius: 50%;
  background: #6a737d;
  color: #fff;
  font: 700 9px/12px "Liberation Serif", serif;
  text-align: center;
}
.vals { text-align: right; white-space: nowrap; }
.v-gray { font-size: 13.4px; line-height: 22px; color: #6a737d; }
.v-bold { font-size: 13.8px; line-height: 26px; margin-top: 4px; font-weight: 700; color: #24272a; }
.row-b { height: 54px; align-items: center; }
.gas-note { width: 108px; }
.site { font-style: italic; color: #6a737d; line-height: 18px; }
.likely { color: #28a745; font-size: 11.7px; line-height: 17px; margin-top: 3px; }
.maxline { display: flex; align-items: center; }
.max-label { font-weight: 700; text-align: right; line-height: 17px; color: #535a61; margin-right: 9px; }
.small { color: #6a737d; font-size: 12px; line-height: 17px; white-space: nowrap; }
.mm-hr { height: 1px; background: #bbc0c5; margin-top: 25px; }
.row-c { margin-top: 22px; align-items: center; height: 52px; }
.total { font-size: 14px; font-weight: 700; padding-bottom: 6px; }
.amount { width: 90px; color: #6a737d; line-height: 17px; }
.max-amount { font-weight: 700; font-size: 11.5px; color: #535a61; line-height: 17px; }
.mm-footer {
  margin-top: auto;
  border-top: 1px solid #d6d9dc;
  padding: 15px 16px 16px;
  display: flex;
  gap: 16px;
}
.btn {
  flex: 1;
  height: 45px;
  border-radius: 23px;
  font: 14px "Open Sans", sans-serif;
}
.btn-out { background: #fff; border: 1px solid #037dd6; color: #037dd6; }
.btn-fill { background: #037dd6; border: 1px solid #037dd6; color: #fff; }
.mm-vbar { width: 15px; flex: none; background: #f1f1f1; display: flex; flex-direction: column; align-items: center; padding: 7px 0 6px; }
.mm-thumb { width: 11px; height: 323px; background: #c1c1c1; margin-top: 90px; margin-bottom: auto; }
```
